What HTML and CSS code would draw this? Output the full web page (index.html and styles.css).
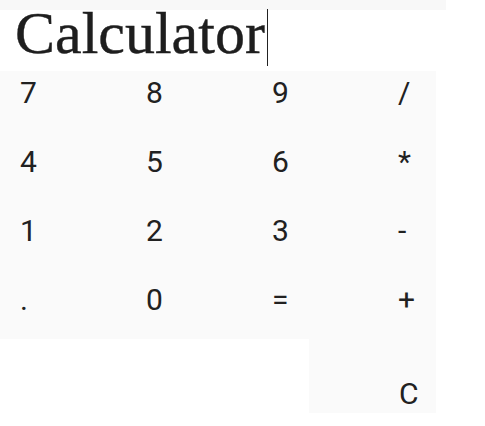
FILE: index.html
```html
<!DOCTYPE html>
<html>
<head>
<meta charset="utf-8">
<link rel="stylesheet" href="styles.css">
</head>
<body>
<div class="topbar"></div>
<div class="display">
  <span class="title">Calculator</span><span class="cursor"></span>
</div>
<div class="keys">
  <div class="key">7</div><div class="key">8</div><div class="key">9</div><div class="key">/</div>
  <div class="key">4</div><div class="key">5</div><div class="key">6</div><div class="key">*</div>
  <div class="key">1</div><div class="key">2</div><div class="key">3</div><div class="key">-</div>
  <div class="key">.</div><div class="key">0</div><div class="key">=</div><div class="key">+</div>
</div>
<div class="bottom">
  <div class="clear">C</div>
</div>
</body>
</html>
```
FILE: styles.css
```css
html, body {
  margin: 0;
  padding: 0;
  background: #ffffff;
}
body {
  width: 485px;
  height: 426px;
  overflow: hidden;
}
.topbar {
  width: 446px;
  height: 10px;
  background: #f8f8f8;
}
.display {
  height: 61px;
  display: flex;
  align-items: flex-start;
  padding-left: 15px;
}
.title {
  font-family: "Liberation Serif", serif;
  font-size: 60px;
  line-height: 46px;
  color: #1e1e1e;
  -webkit-text-stroke: 0.4px #1e1e1e;
}
.cursor {
  width: 1px;
  height: 57px;
  margin-top: -1px;
  margin-left: 2px;
  background: #222222;
}
.keys {
  width: 436px;
  height: 268px;
  background: #fafafa;
  display: grid;
  grid-template-columns: repeat(4, 126px);
  grid-template-rows: 69px 69px 69px 61px;
}
.key, .clear {
  font-family: Roboto, "Liberation Sans", sans-serif;
  font-size: 30px;
  line-height: 34px;
  color: #212121;
}
.key {
  padding: 5px 0 0 20px;
}
.bottom {
  display: flex;
  padding-left: 309px;
}
.clear {
  width: 127px;
  height: 74px;
  box-sizing: border-box;
  background: #fafafa;
  padding: 38px 0 0 90px;
}
```
